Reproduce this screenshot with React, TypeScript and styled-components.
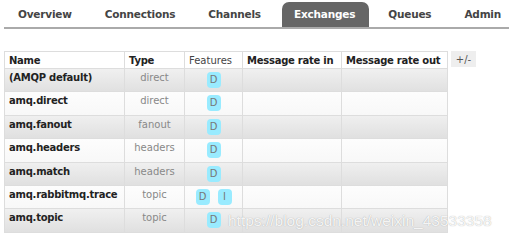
import React from 'react';
import styled, { createGlobalStyle } from 'styled-components';

const GlobalStyle = createGlobalStyle`
  html, body {
    margin: 0;
    padding: 0;
    background: #fff;
    font-family: "DejaVu Sans", Verdana, sans-serif;
    font-size: 10px;
    color: #444;
  }
`;

const Page = styled.div`
  position: relative;
  width: 509px;
  height: 242px;
  overflow: hidden;
`;

const Nav = styled.ul`
  display: flex;
  margin: 0 0 0 4px;
  padding: 2px 0 0 2px;
  list-style: none;
  border-bottom: 2px solid #aaa;
  height: 29px;
  box-sizing: border-box;
`;

const Tab = styled.li<{ $active?: boolean }>`
  display: flex;
  align-items: center;
  padding: 0 14px 1px 12px;
  margin-right: 7px;
  font-weight: bold;
  font-size: 10.5px;
  letter-spacing: -0.2px;
  color: ${p => (p.$active ? '#fff' : '#444')};
  background: ${p => (p.$active ? '#666' : 'transparent')};
  border-radius: 7px 7px 0 0;
`;

const Content = styled.div`
  display: flex;
  align-items: flex-start;
  gap: 3px;
  padding: 22px 0 0 4px;
`;

const Table = styled.table`
  border-collapse: collapse;
  border: 1px solid #ddd;
  table-layout: fixed;
  width: 443px;
`;

const Th = styled.th<{ $plain?: boolean; $w: number }>`
  width: ${p => p.$w}px;
  box-sizing: border-box;
  height: 17px;
  padding: 1px 4px 0;
  text-align: left;
  font-weight: ${p => (p.$plain ? 'normal' : 'bold')};
  letter-spacing: ${p => (p.$plain ? '0' : '-0.25px')};
  color: ${p => (p.$plain ? '#444' : '#222')};
  background: #fff;
  border: 1px solid #ddd;
  white-space: nowrap;
  overflow: hidden;
`;

const Row = styled.tr<{ $alt: boolean }>`
  background: ${p =>
    p.$alt
      ? 'linear-gradient(#f0f0f0, #e0e0e0)'
      : 'linear-gradient(#fdfdfd, #f8f8f8)'};
`;

const Td = styled.td<{ $center?: boolean; $bold?: boolean }>`
  height: 23.4px;
  box-sizing: border-box;
  padding: 3px 4px 2px;
  vertical-align: top;
  text-align: ${p => (p.$center ? 'center' : 'left')};
  font-weight: ${p => (p.$bold ? 'bold' : 'normal')};
  letter-spacing: ${p => (p.$bold ? '-0.25px' : '0')};
  color: ${p => (p.$bold ? '#222' : '#888')};
  border-left: 1px solid #ddd;
  border-right: 1px solid #ddd;
  border-top: 1px solid #ddd;
  white-space: nowrap;
  overflow: hidden;
  line-height: 12px;
`;

const Badges = styled.div`
  display: flex;
  justify-content: center;
  gap: 8px;
`;

const Badge = styled.span`
  display: inline-flex;
  align-items: center;
  justify-content: center;
  width: 14px;
  height: 16px;
  border-radius: 4px;
  background: #99ebff;
  color: #777;
  font-size: 10px;
`;

const Toggle = styled.span`
  display: flex;
  align-items: center;
  justify-content: center;
  width: 25px;
  height: 16px;
  background: #eee;
  color: #555;
  font-size: 10px;
`;

const Watermark = styled.div`
  position: absolute;
  left: 228px;
  top: 212px;
  font-family: "Liberation Sans", Arial, sans-serif;
  font-size: 15.5px;
  color: rgba(255, 255, 255, 0.9);
  text-shadow: 0 0 1px rgba(110, 110, 110, 0.6);
  white-space: nowrap;
`;

const tabs = ['Overview', 'Connections', 'Channels', 'Exchanges', 'Queues', 'Admin'];

const exchanges = [
  { name: '(AMQP default)', type: 'direct', features: ['D'] },
  { name: 'amq.direct', type: 'direct', features: ['D'] },
  { name: 'amq.fanout', type: 'fanout', features: ['D'] },
  { name: 'amq.headers', type: 'headers', features: ['D'] },
  { name: 'amq.match', type: 'headers', features: ['D'] },
  { name: 'amq.rabbitmq.trace', type: 'topic', features: ['D', 'I'] },
  { name: 'amq.topic', type: 'topic', features: ['D'] },
];

export default function App() {
  return (
    <Page>
      <GlobalStyle />
      <Nav>
        {tabs.map(t => (
          <Tab key={t} $active={t === 'Exchanges'}>
            {t}
          </Tab>
        ))}
      </Nav>
      <Content>
        <Table>
          <thead>
            <tr>
              <Th $w={120}>Name</Th>
              <Th $w={60}>Type</Th>
              <Th $w={58} $plain>
                Features
              </Th>
              <Th $w={99}>Message rate in</Th>
              <Th $w={106}>Message rate out</Th>
            </tr>
          </thead>
          <tbody>
            {exchanges.map((x, i) => (
              <Row key={x.name} $alt={i % 2 === 0}>
                <Td $bold>{x.name}</Td>
                <Td $center>{x.type}</Td>
                <Td>
                  <Badges>
                    {x.features.map(f => (
                      <Badge key={f}>{f}</Badge>
                    ))}
                  </Badges>
                </Td>
                <Td />
                <Td />
              </Row>
            ))}
          </tbody>
        </Table>
        <Toggle>+/-</Toggle>
      </Content>
      <Watermark>https://blog.csdn.net/weixin_43533358</Watermark>
    </Page>
  );
}
